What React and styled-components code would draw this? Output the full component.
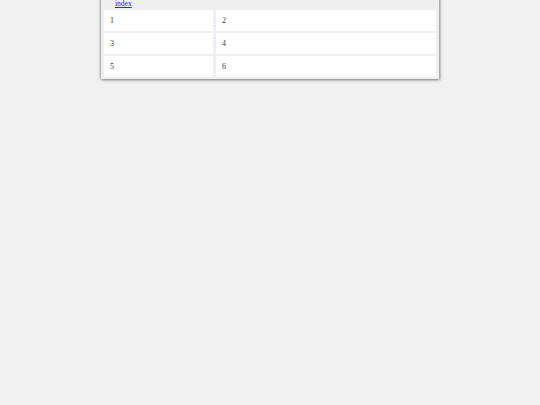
import * as React from "react";
import styled, { createGlobalStyle } from "styled-components";

const Global = createGlobalStyle`
    html, body {
        margin: 0;
        padding: 0;
        background: #f1f1f1;
    }
`;

const Page = styled.div`
    width: 540px;
    height: 405px;
    font-family: "Liberation Serif", "Times New Roman", serif;
`;

const Sheet = styled.div`
    width: 332px;
    margin: -6px auto 0;
    padding: 0 3px 2px;
    background: #efefef;
    box-shadow: 1px 1px 3px rgba(0, 0, 0, 0.45), -1px 0 2px rgba(0, 0, 0, 0.25);
`;

const Nav = styled.div`
    height: 12px;
    padding: 4px 0 0 11px;
    font-size: 7.5px;
    line-height: 12px;

    a {
        color: #2a2ac8;
    }
`;

const Grid = styled.div`
    display: grid;
    grid-template-columns: 109px 1fr;
    gap: 2px 3px;
`;

const Cell = styled.div`
    height: 21px;
    background: #ffffff;
    padding-left: 6px;
    font-size: 8px;
    line-height: 21px;
    color: #3a3a3a;
    box-sizing: border-box;
`;

const cells = ["1", "2", "3", "4", "5", "6"];

const App = () => {
    return (
        <Page>
            <Global />
            <Sheet>
                <Nav>
                    <a href="#index">index</a>
                </Nav>
                <Grid>
                    {cells.map((c) => (
                        <Cell key={c}>{c}</Cell>
                    ))}
                </Grid>
            </Sheet>
        </Page>
    );
};

export default App;
